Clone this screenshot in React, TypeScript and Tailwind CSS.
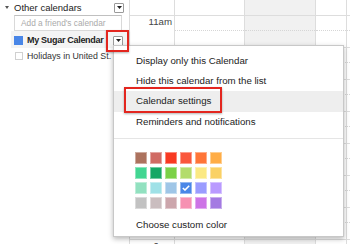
import React from "react";

const swatches = [
  ["bg-[#ac725e]", "bg-[#d06b64]", "bg-[#f83a22]", "bg-[#fa573c]", "bg-[#ff7537]", "bg-[#ffad46]"],
  ["bg-[#42d692]", "bg-[#16a765]", "bg-[#7bd148]", "bg-[#b3dc6c]", "bg-[#fbe983]", "bg-[#fad165]"],
  ["bg-[#92e1c0]", "bg-[#9fe1e7]", "bg-[#9fc6e7]", "bg-[#4986e7]", "bg-[#9a9cff]", "bg-[#b99aff]"],
  ["bg-[#c2c2c2]", "bg-[#cabdbf]", "bg-[#cca6ac]", "bg-[#f691b2]", "bg-[#cd74e6]", "bg-[#a47ae2]"],
];

function DropBtn() {
  return (
    <div className="w-[10px] h-[10px] border border-[#9a9a9a] bg-white flex items-center justify-center rounded-[1px]">
      <svg width="5" height="3" viewBox="0 0 5 3">
        <path d="M0 0H5L2.5 3Z" fill="#222" />
      </svg>
    </div>
  );
}

function HourRows({ labels }: { labels?: string[] }) {
  const rows = labels ?? ["", "", "", "", "", "", "", ""];
  return (
    <div className="flex flex-col">
      <div className="h-[15px]" />
      {rows.map((l, i) => (
        <div key={i} className="h-[32px] border-t border-[#dddddd] flex flex-col">
          {labels ? (
            <div className="text-right pr-[2px] text-[9.7px] leading-[10px] pt-[1px] text-[#444]">{l}</div>
          ) : (
            <div className="h-[15px] border-b border-dotted border-[#d6d6d6]" />
          )}
        </div>
      ))}
    </div>
  );
}

export default function App() {
  return (
    <div
      className="relative w-[350px] h-[244px] overflow-hidden bg-white text-[#222]"
      style={{ fontFamily: '"Liberation Sans", Arial, Helvetica, sans-serif' }}
    >
      <div className="flex h-full">
        {/* Sidebar */}
        <div className="w-[129px] shrink-0 flex flex-col">
          <div className="h-[15px] flex items-center pr-[5px]">
            <svg className="ml-[5px]" width="4" height="3" viewBox="0 0 4 3">
              <path d="M0 0H4L2 3Z" fill="#555" />
            </svg>
            <span className="ml-[5px] text-[9.5px] leading-none text-[#222]">Other calendars</span>
            <div className="ml-auto">
              <DropBtn />
            </div>
          </div>
          <div className="ml-[14px] w-[108px] h-[16px] border border-[#d9d9d9] border-t-[#c0c0c0] flex items-center pl-[6px] text-[8.3px] text-[#aaaaaa] bg-white">
            Add a friend's calendar
          </div>
          <div className="ml-[11px] h-[17px] pt-[2px] flex items-center bg-[#f4f4f4] pr-[6px]">
            <div className="ml-[3px] w-[9px] h-[9px] bg-[#4986e7]" />
            <span className="ml-[4px] text-[9px] font-bold tracking-[-0.3px] leading-none text-[#222] whitespace-nowrap">
              My Sugar Calendar
            </span>
            <div className="ml-auto">
              <DropBtn />
            </div>
          </div>
          <div className="ml-[11px] h-[16px] flex items-center">
            <div className="ml-[4px] w-[8px] h-[8px] border border-[#d0d0d0] bg-white" />
            <span className="ml-[4px] text-[8.8px] leading-none text-[#333] whitespace-nowrap">Holidays in United St.</span>
          </div>
        </div>

        {/* Calendar grid */}
        <div className="flex-1 flex">
          <div className="w-[45px] border-l border-[#dddddd]">
            <HourRows labels={["11am", "", "", "", "", "", "", "6pm"]} />
          </div>
          <div className="w-[70px] border-l border-[#dddddd]">
            <HourRows />
          </div>
          <div className="w-[71px] border-l border-[#dddddd] bg-[#f1f1f1]">
            <HourRows />
          </div>
          <div className="w-[31px] border-l border-[#dddddd]">
            <HourRows />
          </div>
          <div className="flex-1 border-l border-[#dddddd]">
            <HourRows />
          </div>
        </div>
      </div>

      {/* Context menu */}
      <div className="absolute left-[113px] top-[45px] w-[231px] h-[192px] bg-white border border-[#c8c8c8] shadow-[0_2px_5px_rgba(0,0,0,0.28)] flex flex-col pt-[5px] text-[9.7px] text-[#222]">
        <div className="h-[20px] flex items-center pl-[22px]">Display only this Calendar</div>
        <div className="h-[20px] flex items-center pl-[22px]">Hide this calendar from the list</div>
        <div className="h-[21px] flex items-center pl-[22px] bg-[#eeeeee]">Calendar settings</div>
        <div className="h-[20px] flex items-center pl-[22px]">Reminders and notifications</div>
        <div className="mt-[6px] border-t border-[#e5e5e5]" />
        <div className="mt-[13px] pl-[21px] flex flex-col gap-[3px]">
          {swatches.map((row, ri) => (
            <div key={ri} className="flex gap-[3px]">
              {row.map((c, ci) => (
                <div
                  key={ci}
                  className={`${c} w-[12px] h-[12px] shadow-[inset_0_0_0_1px_rgba(255,255,255,0.4)] flex items-center justify-center`}
                >
                  {ri === 2 && ci === 3 ? (
                    <svg width="8" height="6" viewBox="0 0 8 6">
                      <path d="M0.8 3L3 5L7.2 0.8" stroke="#fff" strokeWidth="1.6" fill="none" />
                    </svg>
                  ) : null}
                </div>
              ))}
            </div>
          ))}
        </div>
        <div className="mt-[6px] h-[20px] flex items-center pl-[22px]">Choose custom color</div>
      </div>

      {/* Red highlight boxes */}
      <div className="absolute left-[106px] top-[30px] w-[23px] h-[22px] border-2 border-[#e3261f] shadow-[0_1px_2px_rgba(0,0,0,0.3)]" />
      <div className="absolute left-[124px] top-[87px] w-[98px] h-[26px] border-2 border-[#e3261f] shadow-[0_1px_2px_rgba(0,0,0,0.3)]" />
    </div>
  );
}
